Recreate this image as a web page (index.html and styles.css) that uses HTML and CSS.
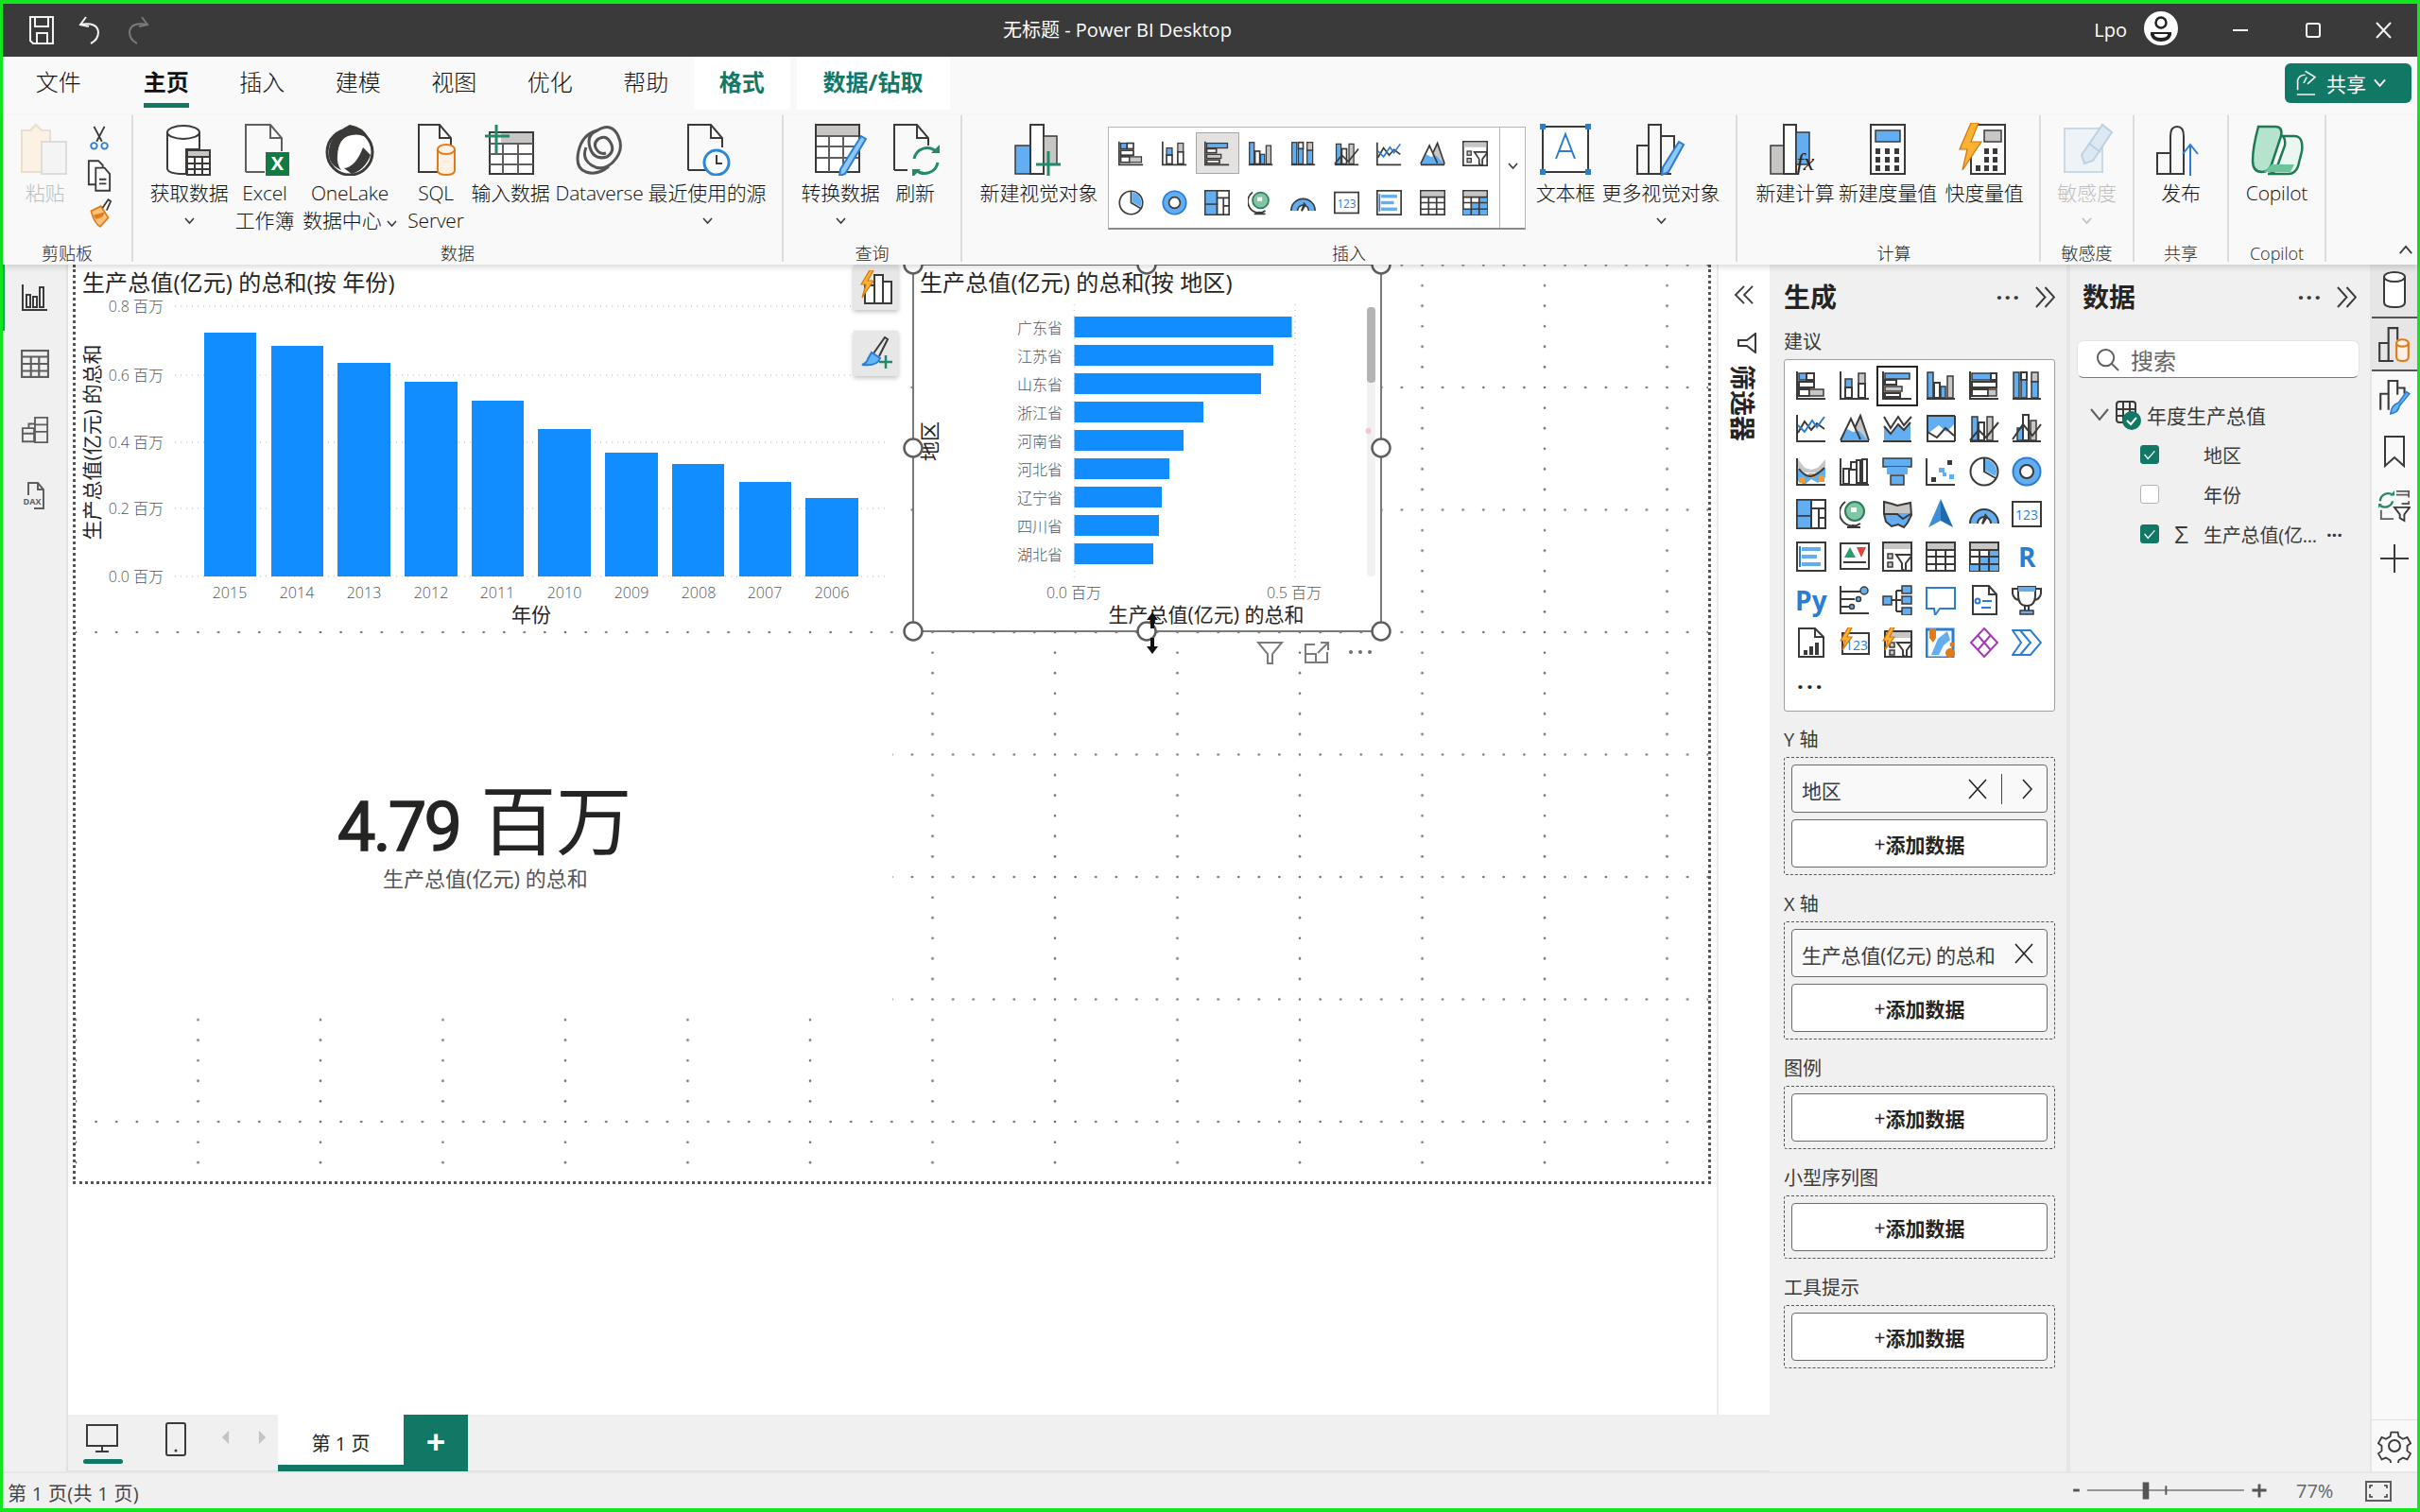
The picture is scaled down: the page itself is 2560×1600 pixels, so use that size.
FILE: index.html
```html
<!DOCTYPE html>
<html lang="zh-CN">
<head>
<meta charset="utf-8">
<title>无标题 - Power BI Desktop</title>
<link rel="stylesheet" href="styles.css">
</head>
<body>
<svg class="defs" aria-hidden="true">
<defs>
<pattern id="dots" patternUnits="userSpaceOnUse" x="-2" y="-1.5" width="129.5" height="129.5">
  <circle class="dot" cx="2" cy="2" r="1.3"/><circle class="dot" cx="23.6" cy="2" r="1.3"/><circle class="dot" cx="45.2" cy="2" r="1.3"/><circle class="dot" cx="66.8" cy="2" r="1.3"/><circle class="dot" cx="88.3" cy="2" r="1.3"/><circle class="dot" cx="109.9" cy="2" r="1.3"/>
  <circle class="dot" cx="2" cy="23.6" r="1.3"/><circle class="dot" cx="2" cy="45.2" r="1.3"/><circle class="dot" cx="2" cy="66.8" r="1.3"/><circle class="dot" cx="2" cy="88.3" r="1.3"/><circle class="dot" cx="2" cy="109.9" r="1.3"/>
</pattern>
</defs>

<!-- visual icons -->
<symbol id="v1" viewBox="0 0 32 32"><path class="ln" d="M1 1v29h30"/><rect class="bb" x="3" y="3" width="8" height="7"/><rect class="lb" x="11" y="3" width="8" height="7"/><rect class="lb" x="3" y="12" width="16" height="6"/><rect class="lb" x="3" y="20" width="11" height="7"/><rect class="gg" x="14" y="20" width="15" height="7"/></symbol>
<symbol id="v2" viewBox="0 0 32 32"><path class="ln" d="M1 1v29h30"/><rect class="bb" x="6" y="9" width="7" height="9"/><rect class="lb" x="6" y="18" width="7" height="11"/><rect class="gg" x="20" y="3" width="7" height="11"/><rect class="lb" x="20" y="14" width="7" height="15"/></symbol>
<symbol id="v3" viewBox="0 0 32 32"><path class="ln" d="M1 1v29h30"/><rect class="bb" x="3" y="3" width="26" height="6"/><rect class="lb" x="3" y="10" width="12" height="5"/><rect class="gg" x="3" y="17" width="18" height="5"/><rect class="lb" x="3" y="24" width="16" height="4"/></symbol>
<symbol id="v4" viewBox="0 0 32 32"><path class="ln" d="M1 30h30"/><rect class="bb" x="2" y="2" width="6" height="27"/><rect class="lb" x="9" y="13" width="6" height="16"/><rect class="bb" x="16" y="17" width="5" height="12"/><rect class="gg" x="23" y="6" width="6" height="23"/></symbol>
<symbol id="v5" viewBox="0 0 32 32"><path class="ln" d="M1 1v29h30"/><rect class="bb" x="3" y="3" width="20" height="7"/><rect class="lb" x="23" y="3" width="6" height="7"/><rect class="lb" x="3" y="12" width="26" height="6"/><rect class="lb" x="3" y="20" width="17" height="7"/><rect class="gg" x="20" y="20" width="9" height="7"/></symbol>
<symbol id="v6" viewBox="0 0 32 32"><path class="ln" d="M1 30h30"/><rect class="bb" x="2" y="2" width="6" height="27"/><rect class="lb" x="10" y="2" width="6" height="8"/><rect class="bb" x="10" y="10" width="6" height="19"/><rect class="gg" x="21" y="2" width="7" height="10"/><rect class="bb" x="21" y="12" width="7" height="17"/></symbol>
<symbol id="v7" viewBox="0 0 32 32"><path class="ln" d="M1 2v28h30"/><path class="ln" d="M2 21 9 9l7 9 6-7 8 6"/><path class="lnb" d="M2 13l7 7 8-12 5 7 8-11"/></symbol>
<symbol id="v8" viewBox="0 0 32 32"><path class="go" d="M16 17 23 2l8 28H16z"/><path class="bo" d="M1 30 8 17l6 3 7-1 10 11z"/><path class="ln" d="M1 29 12 6l10 22M31 30H1M16 16l6-13 9 26"/></symbol>
<symbol id="v9" viewBox="0 0 32 32"><path class="bo" d="M2 14l7 8 8-10 6 6 7-8v19H2z"/><path class="ln" d="M1 30h30M2 4l7 12 8-12 6 9 8-9M2 14l7 8 8-10 6 6 7-8"/></symbol>
<symbol id="v10" viewBox="0 0 32 32"><path class="bo" d="M2 3h29v8l-9 9-8-7-12 9z"/><path class="ln" d="M1 3h30M1 30h30M2 3v27M31 3v27M2 20l10 6 9-10 9 8"/></symbol>
<symbol id="v11" viewBox="0 0 32 32"><path class="ln" d="M1 30h30"/><rect class="bb" x="3" y="4" width="6" height="25"/><rect class="lb" x="10" y="10" width="6" height="19"/><rect class="gg" x="19" y="4" width="6" height="25"/><path class="ln" d="M1 29 10 18l8 8 13-16"/></symbol>
<symbol id="v12" viewBox="0 0 32 32"><path class="ln" d="M1 30h30"/><rect class="bb" x="6" y="16" width="6" height="13"/><rect class="lb" x="12" y="2" width="6" height="27"/><rect class="gg" x="20" y="8" width="6" height="21"/><path class="ln" d="M1 28 12 12l10 12 9-12"/></symbol>
<symbol id="v13" viewBox="0 0 32 32"><path class="go" d="M2 3l7 9 7 2 7-2 8-9v8l-7 6H9l-7-5z"/><path class="bo" d="M2 13l7 5 7 2 8-4 7-4v10l-8 6-7-4-7 6-7-4z"/><path d="M3 22h6v6H3zM24 20h6v7h-6zM13 18h6v5h-6z" fill="#f29b30"/><path class="ln" d="M1 2v28h30M3 13q7 9 13 8t14-9"/></symbol>
<symbol id="v14" viewBox="0 0 32 32"><path class="ln" d="M1 2v28h30"/><rect class="lb" x="4" y="13" width="6" height="16"/><rect class="lb" x="12" y="6" width="6" height="8"/><rect class="lb" x="18" y="4" width="4" height="24"/><rect class="lb" x="24" y="3" width="5" height="25"/></symbol>
<symbol id="v15" viewBox="0 0 32 32"><rect class="bb" x="1" y="2" width="30" height="9"/><rect class="bo" x="5" y="11" width="22" height="8"/><rect class="bb" x="9" y="20" width="14" height="10"/></symbol>
<symbol id="v16" viewBox="0 0 32 32"><path class="ln" d="M1 2v28h30"/><rect x="23" y="4" width="5" height="5" fill="#3b3a39"/><rect class="bo" x="14" y="12" width="6" height="5"/><rect class="bo" x="25" y="19" width="5" height="5"/><rect x="6" y="22" width="5" height="5" fill="#3b3a39"/><rect class="bo" x="18" y="17" width="4" height="4"/></symbol>
<symbol id="v17" viewBox="0 0 32 32"><circle class="lb" cx="16" cy="16" r="14.5"/><path class="ln" d="M16 2v14l12 7"/><path class="bo" d="M17 3a13 13 0 0 1 11 18L17 15z"/></symbol>
<symbol id="v18" viewBox="0 0 32 32"><path class="bo" fill-rule="evenodd" d="M16 1a15 15 0 1 0 .1 0zM16 9a7 7 0 1 1-.1 0z"/><circle class="ac" cx="16" cy="16" r="14.5"/><circle cx="16" cy="16" r="7" fill="#fff" stroke="#3b3a39" stroke-width="2"/></symbol>
<symbol id="v19" viewBox="0 0 32 32"><rect class="lb" x="1" y="1" width="30" height="30"/><rect class="bb" x="1" y="1" width="15" height="17"/><rect class="bb" x="1" y="18" width="15" height="13"/><path class="ln" d="M16 1v30M16 10h15M24 10v21M24 20h7"/></symbol>
<symbol id="v20" viewBox="0 0 32 32"><circle cx="16" cy="13" r="10" fill="#7fc6a4" stroke="#2f7b58" stroke-width="2"/><path class="ln" d="M6 3a14 14 0 0 0 16 23M14 27v3M8 30h14"/><path d="M12 9h6v5h-6z" fill="#fff"/></symbol>
<symbol id="v21" viewBox="0 0 32 32"><path class="go" d="M2 3l8 2 6 2 14-3v11l-28 1z"/><path class="bo" d="M2 15h28l-3 9-4 6-6-3-7 2-6-5z"/><path class="ln" d="M2 3l8 2 6 2 14-3 1 13-4 8-4 5-6-3-7 2-6-5-2-8zM3 16h13l6 5 8-5"/></symbol>
<symbol id="v22" viewBox="0 0 32 32"><path d="M16 0 3 30l13-7z" fill="#3e8fd8"/><path d="M16 0l13 30-13-7z" fill="#1f6bb0"/></symbol>
<symbol id="v23" viewBox="0 0 32 32"><path class="bo" d="M1 26a15 15 0 0 1 30 0h-8a7 7 0 0 0-14 0z"/><path class="ln" d="M1 26a15 15 0 0 1 30 0M9 26a7 7 0 0 1 14 0"/><path d="M17 15l3 4-5 8-2-1z" fill="#3b3a39"/></symbol>
<symbol id="v25" viewBox="0 0 32 32"><rect class="lb" x="1" y="1" width="30" height="30"/><rect class="bo" x="6" y="6" width="20" height="4"/><rect class="bo" x="6" y="14" width="16" height="4"/><rect class="bo" x="6" y="22" width="20" height="4"/><path class="lnb" d="M4 5v22"/></symbol>
<symbol id="v26" viewBox="0 0 32 32"><rect class="lb" x="1" y="2" width="30" height="27"/><path d="M5 17 11 6l6 11z" fill="#2e9b6b"/><path d="M18 6h10l-5 11z" fill="#e0443e"/><path class="ln" d="M4 22h24"/></symbol>
<symbol id="v27" viewBox="0 0 32 32"><rect class="lb" x="1" y="1" width="30" height="30"/><rect class="go" x="2" y="2" width="28" height="6"/><rect class="gg" x="6" y="13" width="5" height="5"/><rect class="gg" x="6" y="22" width="5" height="5"/><path class="lb" d="M15 14h17l-7 9v9l-4-3v-6z"/></symbol>
<symbol id="v28" viewBox="0 0 32 32"><rect class="lb" x="1" y="1" width="30" height="30"/><rect class="go" x="2" y="2" width="28" height="7"/><path class="ln" d="M1 9h30M1 16h30M1 24h30M11 9v22M21 9v22"/></symbol>
<symbol id="v29" viewBox="0 0 32 32"><rect class="lb" x="1" y="1" width="30" height="30"/><rect class="go" x="2" y="2" width="28" height="7"/><rect class="bo" x="21" y="9" width="10" height="22"/><rect class="bo" x="1" y="24" width="30" height="7"/><rect class="bo" x="11" y="16" width="10" height="8"/><path class="ln" d="M1 9h30M1 16h30M1 24h30M11 9v22M21 9v22"/></symbol>
<symbol id="v32" viewBox="0 0 32 32"><path class="ln" d="M1 1v29h30M2 7h20M2 15h14M2 23h8"/><circle class="bb" cx="26" cy="6" r="4"/><circle class="bb" cx="20" cy="15" r="2.5"/><circle class="bb" cx="13" cy="23" r="2.5"/></symbol>
<symbol id="v33" viewBox="0 0 32 32"><path class="ln" d="M10 16h10M15 6v22M15 6h6M15 28h6"/><rect class="bb" x="1" y="12" width="9" height="9"/><rect class="bb" x="21" y="1" width="10" height="8"/><rect class="bb" x="21" y="12" width="10" height="8"/><rect class="bb" x="21" y="24" width="10" height="8"/></symbol>
<symbol id="v34" viewBox="0 0 32 32"><path class="lnb" d="M1 3h30v22H15l-5 7-1-7H1z"/></symbol>
<symbol id="v35" viewBox="0 0 32 32"><path class="lb" d="M4 1h17l8 9v21H4z"/><path class="ln" d="M21 1v9h8"/><circle class="ac" cx="9" cy="17" r="2.5"/><path class="lnb" d="M14 17h10M13 24h10"/></symbol>
<symbol id="v36" viewBox="0 0 32 32"><path class="ln" d="M6 4H1v5q1 6 7 7M26 4h5v5q-1 6-7 7M14 22v5M18 22v5"/><path class="lb" d="M7 2h18v9q0 11-9 11T7 11z"/><rect class="bo" x="7" y="2" width="18" height="5"/><rect class="bb" x="9" y="27" width="14" height="4"/></symbol>
<symbol id="v37" viewBox="0 0 32 32"><path class="lb" d="M3 1h17l9 9v21H3z"/><path class="ln" d="M20 1v9h9"/><rect x="8" y="24" width="4" height="5" fill="#3b3a39"/><rect x="14" y="20" width="4" height="9" fill="#3b3a39"/><rect x="20" y="16" width="4" height="13" fill="#3b3a39"/></symbol>
<symbol id="v39" viewBox="0 0 32 32"><rect class="lb" x="3" y="4" width="28" height="27"/><rect class="go" x="4" y="5" width="26" height="6"/><rect class="gg" x="8" y="16" width="5" height="5"/><rect class="gg" x="8" y="24" width="5" height="5"/><path class="lb" d="M16 16h16l-6 8v8l-4-3v-5z"/><path class="bolt" d="M9 0 1 14h5l-3 10 10-14H8l5-10z"/></symbol>
<symbol id="v40" viewBox="0 0 32 32"><path d="M1 2h28v30H1z" fill="#fff" stroke="#2b7cd3" stroke-width="3"/><path class="bo" d="M13 12l10-8 3 9-7 6-5 10H6z"/><path d="M4 1h7v10l-3 5-4-5z" fill="#e07b1a"/><circle cx="26" cy="27" r="5" fill="#e07b1a"/><circle cx="28" cy="18" r="2.5" fill="#e07b1a"/></symbol>
<symbol id="v41" viewBox="0 0 32 32"><path d="M16 1l14 15-14 15L2 16z" fill="none" stroke="#a23bb0" stroke-width="2"/><path d="M9 8l14 16M23 8 9 24" fill="none" stroke="#a23bb0" stroke-width="2"/></symbol>
<symbol id="v42" viewBox="0 0 32 32"><path d="M1 3h19l11 13-11 13H1l9-13z" fill="none" stroke="#2b7cd3" stroke-width="2"/><path d="M9 3l11 13L9 29" fill="none" stroke="#2b7cd3" stroke-width="2"/></symbol>

<!-- ribbon icons -->
<symbol id="r-paste" viewBox="0 0 56 56"><path fill="#fbf2e4" stroke="#eadfcc" stroke-width="2" d="M3 8h9l6-6 6 6h9v44H3z"/><rect x="24" y="20" width="26" height="34" fill="#f4f4f4" stroke="#dedcda" stroke-width="2"/></symbol>
<symbol id="r-get" viewBox="0 0 56 56"><path class="lb" d="M5 10v38q0 6 17 6h3V28h14V10"/><ellipse class="lb" cx="22" cy="10" rx="17" ry="7"/><rect class="lb" x="26" y="29" width="24" height="26"/><rect class="go" x="27" y="30" width="22" height="6"/><path class="ln" d="M27 36h22M27 43h22M27 49h22M34 36v19M42 36v19"/></symbol>
<symbol id="r-lake" viewBox="0 0 56 56"><circle cx="28" cy="31" r="24" fill="#fff" stroke="#3b3a39" stroke-width="3"/><path fill="#3b3a39" d="M28 2q14 2 20 14-12-6-22-2-10 4-11 20-1 10 4 16Q4 44 6 28T28 2z"/><path fill="#3b3a39" d="M22 48q12-1 20-22l8 8Q44 50 30 54z"/></symbol>
<symbol id="r-sql" viewBox="0 0 56 56"><path class="ln" d="M30 52H10V2h22l12 14v10"/><path class="ln" d="M32 2v14h12"/><path d="M30 28v22q0 5 9 5t9-5V28" fill="#fdf0e4" stroke="#e07b1a" stroke-width="2"/><ellipse cx="39" cy="28" rx="9" ry="5" fill="#fdf0e4" stroke="#e07b1a" stroke-width="2"/></symbol>
<symbol id="r-enter" viewBox="0 0 56 56"><rect class="lb" x="6" y="10" width="46" height="44"/><rect class="go" x="18" y="11" width="33" height="10"/><path class="lg" d="M6 22h46M6 33h46M6 44h46M20 22v32M36 22v32"/><path class="gr" d="M13 2v30M1 14h26"/></symbol>
<symbol id="r-dv" viewBox="0 0 56 56"><path fill="none" stroke="#555" stroke-width="3" d="M14 26q-5 12 6 19t22-3q13-13 6-28T26 8q-12 4-8 18t18 10q9-6 4-15t-13-4q-6 5-2 11t10 4"/><path fill="none" stroke="#555" stroke-width="3" d="M26 8Q10 12 6 30t8 22 24-6"/></symbol>
<symbol id="r-recent" viewBox="0 0 56 56"><path class="ln" d="M8 50V2h24l12 14v10M8 50h20"/><path class="ln" d="M32 2v14h12"/><circle cx="38" cy="42" r="13" fill="#fff" stroke="#2b88d8" stroke-width="3"/><path class="ln" d="M38 34v9h6"/></symbol>
<symbol id="r-trans" viewBox="0 0 56 56"><rect class="lb" x="2" y="2" width="46" height="50"/><rect class="go" x="3" y="3" width="44" height="10"/><path class="lg" d="M3 14h44M3 25h44M3 37h44M16 14v38M31 14v38"/><path d="M50 14l5 3-22 37-6 2 1-7z" fill="#8ec8f6" stroke="#2b7cd3" stroke-width="2"/></symbol>
<symbol id="r-refresh" viewBox="0 0 56 56"><path class="ln" d="M6 50V2h24l12 14v8M6 50h14"/><path class="ln" d="M30 2v14h12"/><path class="gr" d="M27 38a14 14 0 0 1 23-8M52 42a14 14 0 0 1-23 8"/><path class="grf" d="M45 32h9v-9zM34 49h-9v9z"/></symbol>
<symbol id="r-newv" viewBox="0 0 56 56"><rect class="bb" x="3" y="24" width="16" height="30"/><rect class="lb" x="19" y="2" width="14" height="52"/><rect class="gg" x="33" y="14" width="14" height="30"/><path class="gr" d="M38 30v26M25 44h26"/></symbol>
<symbol id="r-text" viewBox="0 0 56 56"><rect class="lb" x="4" y="4" width="48" height="48"/><path class="lnb" d="M18 38 28 12l10 26M21 30h14"/><rect x="1" y="1" width="6" height="6" fill="#2b7cd3"/><rect x="49" y="1" width="6" height="6" fill="#2b7cd3"/><rect x="1" y="49" width="6" height="6" fill="#2b7cd3"/><rect x="49" y="49" width="6" height="6" fill="#2b7cd3"/></symbol>
<symbol id="r-morev" viewBox="0 0 56 56"><path class="ln" d="M3 54V24h12v30zM15 54V2h13v52M28 14h14v25M3 54h36"/><path d="M47 20l5 3-16 29-7 3 1-8z" fill="#8ec8f6" stroke="#2b7cd3" stroke-width="2"/></symbol>
<symbol id="r-meas" viewBox="0 0 56 56"><rect class="lb" x="10" y="2" width="36" height="52"/><rect class="bb" x="15" y="8" width="26" height="12"/><path class="keys" d="M15 27h5v6h-5zM25 27h5v6h-5zM35 27h5v6h-5zM15 36h5v6h-5zM25 36h5v6h-5zM35 36h5v6h-5zM15 45h5v6h-5zM25 45h5v6h-5zM35 45h5v6h-5z"/></symbol>
<symbol id="r-quick" viewBox="0 0 56 56"><rect class="lb" x="14" y="2" width="36" height="52"/><rect class="gg" x="28" y="8" width="18" height="12"/><path class="keys" d="M28 27h5v6h-5zM37 27h5v6h-5zM28 36h5v6h-5zM37 36h5v6h-5zM19 45h5v6h-5zM28 45h5v6h-5zM37 45h5v6h-5z"/><path class="bolt" d="M14 0 2 28h8L5 50 25 20H14l8-20z"/></symbol>
<symbol id="r-sens" viewBox="0 0 56 56"><rect x="4" y="6" width="40" height="46" fill="#eef3f7" stroke="#c9d9e6" stroke-width="2"/><path d="M22 34 44 2l10 8-20 30-9 3z" fill="#dce9f3" stroke="#bcd2e3" stroke-width="2"/><path d="M30 22l12 9" stroke="#bcd2e3" stroke-width="2"/></symbol>
<symbol id="r-pub" viewBox="0 0 56 56"><path class="ln" d="M3 54V32h14v22zM17 40V14q0-10 7-10t7 10v40H3M17 32V20"/><path class="lnb" d="M38 56V24M30 33l8-10 8 10"/></symbol>
<symbol id="r-cop" viewBox="0 0 56 56"><path fill="#b6e3cc" stroke="#1e7a55" stroke-width="2.5" d="M8 4h18q8 0 6 10L22 44q-3 8-10 8-10 0-10-12 0-14 6-36z"/><path fill="#e9f7f0" stroke="#1e7a55" stroke-width="2.5" d="M34 14h12q10 0 8 16l-4 16q-3 8-10 8H18q7 0 10-8l8-22q1-6-2-10z"/><path fill="#6cc49a" d="M22 44h24l-4 8H14z"/></symbol>
<symbol id="s-scis" viewBox="0 0 28 28"><path class="ln" d="M8 1l9 17M20 1l-9 17"/><circle class="ac" cx="8" cy="23" r="3.5"/><circle class="ac" cx="20" cy="23" r="3.5"/></symbol>
<symbol id="s-copy" viewBox="0 0 28 36"><path class="lb" d="M2 1h11l5 5v22H2z"/><path class="lb" d="M10 9h10l6 7v19H10z"/><path class="ln" d="M14 22h8M14 27h8"/></symbol>
<symbol id="s-brush" viewBox="0 0 30 36"><path d="M5 15 17 9l9 14-10 11q-7-4-11-19z" fill="#fbc27a" stroke="#e07b1a" stroke-width="2"/><path class="ln" d="M19 11 26 1l3 2-5 11"/><path d="M8 20l14-4-3 6-8 3z" fill="#e07b1a"/></symbol>
<!-- nav + strip -->
<symbol id="n-rep" viewBox="0 0 28 30"><path class="ln" d="M1 1v27h26"/><rect class="lb" x="5" y="12" width="4" height="13"/><rect class="lb" x="12" y="14" width="4" height="11"/><rect class="lb" x="19" y="4" width="4" height="21"/></symbol>
<symbol id="n-tab" viewBox="0 0 28 28"><rect class="lg" x="1" y="1" width="26" height="26"/><path class="lg" d="M1 7h26M1 14h26M1 21h26M10 7v20M18 7v20"/></symbol>
<symbol id="n-mod" viewBox="0 0 32 32"><path class="lg" d="M2 14h13v6H2zM2 20h13v9H2zM16 2h14v8H16zM16 10h14v8H16zM16 18h14v12H16zM9 14V9h7"/></symbol>
<symbol id="x-db" viewBox="0 0 28 40"><path class="lb" d="M3 6v27q0 5 11 5t11-5V6"/><ellipse class="lb" cx="14" cy="6" rx="11" ry="5"/></symbol>
<symbol id="x-chartdb" viewBox="0 0 32 36"><path class="ln" d="M1 35V17h9v18zM10 18V2h9v12M1 35h14"/><path d="M18 17v14q0 4 6 4t6-4V17" fill="#fdf0e4" stroke="#e07b1a" stroke-width="2"/><ellipse cx="24" cy="17" rx="6" ry="3.5" fill="#fdf0e4" stroke="#e07b1a" stroke-width="2"/></symbol>
<symbol id="x-brush" viewBox="0 0 32 36"><path class="ln" d="M2 30V14h8v16M10 16V1h9v14M19 8h7v6"/><path d="M28 12l3 2-10 12q-1 7-9 8 1-9 8-11z" fill="#64b5f6" stroke="#2b7cd3" stroke-width="1.5"/></symbol>
<symbol id="x-mark" viewBox="0 0 22 34"><path class="ln" d="M1 1h20v31l-10-9-10 9z"/></symbol>
<symbol id="x-sync" viewBox="0 0 36 36"><path class="gr2" d="M2 14a9 9 0 0 1 14-7M16 14a9 9 0 0 1-14 5"/><path class="grf" d="M13 8h5V2zM4 17H0v5z"/><path class="lg" d="M20 3h14v7M20 7h14M3 24v10h14M26 17h8v-3"/><path class="lb" d="M18 21h17l-6 8v7l-5-3v-4z"/></symbol>
<symbol id="x-gear" viewBox="0 0 36 36"><path class="ln" d="M14 2h8l1 5 5 3 5-2 4 7-4 3v6l4 3-4 7-5-2-5 3-1 5h-8l-1-5-5-3-5 2-4-7 4-3v-6l-4-3 4-7 5 2 5-3z" transform="translate(1.8 1.8) scale(.9)"/><circle class="ln" cx="18" cy="18" r="6"/></symbol>
</svg>

<div class="app">
  <header class="titlebar">
    <div class="qat">
      <span class="qbtn"><svg class="qi" viewBox="0 0 26 30"><path class="wl" d="M1 1h24v28H4l-3-3z"/><path class="wl" d="M6 1v10h14V1M8 29V18h11v11"/></svg></span>
      <span class="qbtn"><svg class="qi" viewBox="0 0 26 30"><path class="wl" d="M9 1 3 9l9 2M3 9q18-3 19 8 0 8-8 12"/></svg></span>
      <span class="qbtn"><svg class="qi" viewBox="0 0 26 30"><path class="dl" d="M17 1l6 8-9 2M23 9Q5 6 4 17q0 8 8 12"/></svg></span>
    </div>
    <div class="doc-title">无标题 - Power BI Desktop</div>
    <div class="win">
      <span class="user">Lpo</span>
      <svg class="avatar" viewBox="0 0 38 38"><circle cx="19" cy="19" r="18" fill="#fff"/><circle cx="19" cy="13" r="5.5" fill="none" stroke="#222" stroke-width="2.5"/><path d="M8 23h22v3q-2 7-11 7T8 26z" fill="#222"/><path d="M12 25h14v1q-1 3-7 3t-7-3z" fill="#fff"/></svg>
      <span class="wbtn"><svg class="wi" viewBox="0 0 20 20"><path class="wl" d="M2 10h16"/></svg></span>
      <span class="wbtn"><svg class="wi" viewBox="0 0 20 20"><rect class="wl" x="3" y="3" width="14" height="14" rx="2"/></svg></span>
      <span class="wbtn wbtn-close"><svg class="wi" viewBox="0 0 20 20"><path class="wl" d="M3 2l15 16M18 2 3 18"/></svg></span>
    </div>
  </header>

  <nav class="tabs">
    <span class="tab tab-file">文件</span>
    <span class="tab tab-on">主页</span>
    <span class="tab">插入</span>
    <span class="tab">建模</span>
    <span class="tab">视图</span>
    <span class="tab">优化</span>
    <span class="tab">帮助</span>
    <span class="tab tab-ctx">格式</span>
    <span class="tab tab-ctx tab-wide">数据/钻取</span>
    <span class="share"><svg class="share-i" viewBox="0 0 30 34"><path class="wl" d="M2 26V13q2-7 10-7M12 1l13 8-10 9M10 17l4-8M1 32h24"/></svg>共享<svg class="share-c" viewBox="0 0 14 10"><path class="wl" d="M1 1l6 7 6-7"/></svg></span>
  </nav>

  <section class="ribbon">
    <div class="group g-clip">
      <div class="items">
        <div class="item i-paste off"><svg class="ri"><use href="#r-paste"/></svg><span class="lab">粘贴</span></div>
        <div class="smalls">
          <svg class="sm"><use href="#s-scis"/></svg>
          <svg class="sm"><use href="#s-copy"/></svg>
          <svg class="sm"><use href="#s-brush"/></svg>
        </div>
      </div>
      <div class="glabel">剪贴板</div>
    </div>
    <div class="group g-data">
      <div class="items">
        <div class="item i80"><svg class="ri"><use href="#r-get"/></svg><span class="lab">获取数据</span><svg class="chev"><path d="M1 2l4.500 5 4.500-5"/></svg></div>
        <div class="item i80"><svg class="ri" viewBox="0 0 56 56"><path class="lg" d="M8 52V2h26l12 14v14"/><path class="lg" d="M34 2v14h12M8 52h20"/><rect x="29" y="31" width="25" height="25" fill="#107c41"/><text class="tx" x="41.5" y="50">X</text></svg><span class="lab">Excel</span><span class="lab">工作簿</span></div>
        <div class="item i100"><svg class="ri"><use href="#r-lake"/></svg><span class="lab">OneLake</span><span class="lab">数据中心 <svg class="chev chev-in"><path d="M1 2l4.500 5 4.500-5"/></svg></span></div>
        <div class="item i82"><svg class="ri"><use href="#r-sql"/></svg><span class="lab">SQL</span><span class="lab">Server</span></div>
        <div class="item i76"><svg class="ri"><use href="#r-enter"/></svg><span class="lab">输入数据</span></div>
        <div class="item i112"><svg class="ri"><use href="#r-dv"/></svg><span class="lab">Dataverse</span></div>
        <div class="item i116"><svg class="ri"><use href="#r-recent"/></svg><span class="lab">最近使用的源</span><svg class="chev"><path d="M1 2l4.500 5 4.500-5"/></svg></div>
      </div>
      <div class="glabel">数据</div>
    </div>
    <div class="group g-query">
      <div class="items">
        <div class="item i80"><svg class="ri"><use href="#r-trans"/></svg><span class="lab">转换数据</span><svg class="chev"><path d="M1 2l4.500 5 4.500-5"/></svg></div>
        <div class="item i78"><svg class="ri"><use href="#r-refresh"/></svg><span class="lab">刷新</span></div>
      </div>
      <div class="glabel">查询</div>
    </div>
    <div class="group g-insert">
      <div class="items">
        <div class="item i138"><svg class="ri"><use href="#r-newv"/></svg><span class="lab">新建视觉对象</span></div>
        <div class="gallery">
          <div class="gal-grid">
            <span class="cell"><svg class="gi"><use href="#v1"/></svg></span>
            <span class="cell"><svg class="gi"><use href="#v2"/></svg></span>
            <span class="cell cell-on"><svg class="gi"><use href="#v3"/></svg></span>
            <span class="cell"><svg class="gi"><use href="#v4"/></svg></span>
            <span class="cell"><svg class="gi"><use href="#v6"/></svg></span>
            <span class="cell"><svg class="gi"><use href="#v11"/></svg></span>
            <span class="cell"><svg class="gi"><use href="#v7"/></svg></span>
            <span class="cell"><svg class="gi"><use href="#v8"/></svg></span>
            <span class="cell"><svg class="gi"><use href="#v27"/></svg></span>
            <span class="cell"><svg class="gi"><use href="#v17"/></svg></span>
            <span class="cell"><svg class="gi"><use href="#v18"/></svg></span>
            <span class="cell"><svg class="gi"><use href="#v19"/></svg></span>
            <span class="cell"><svg class="gi"><use href="#v20"/></svg></span>
            <span class="cell"><svg class="gi"><use href="#v23"/></svg></span>
            <span class="cell"><svg class="gi" viewBox="0 0 32 32"><rect class="lb" x="1" y="3" width="30" height="26"/><text class="t123" x="16" y="22">123</text></svg></span>
            <span class="cell"><svg class="gi"><use href="#v25"/></svg></span>
            <span class="cell"><svg class="gi"><use href="#v28"/></svg></span>
            <span class="cell"><svg class="gi"><use href="#v29"/></svg></span>
          </div>
          <div class="gal-more"><svg class="chev"><path d="M1 2l4.500 5 4.500-5"/></svg></div>
        </div>
        <div class="item i68"><svg class="ri"><use href="#r-text"/></svg><span class="lab">文本框</span></div>
        <div class="item i134"><svg class="ri"><use href="#r-morev"/></svg><span class="lab">更多视觉对象</span><svg class="chev"><path d="M1 2l4.500 5 4.500-5"/></svg></div>
      </div>
      <div class="glabel">插入</div>
    </div>
    <div class="group g-calc">
      <div class="items">
        <div class="item i98"><svg class="ri" viewBox="0 0 56 56"><rect class="gg" x="2" y="24" width="14" height="30"/><rect class="lb" x="16" y="2" width="13" height="52"/><rect class="bb" x="29" y="10" width="14" height="34"/><text class="tfx" x="39" y="50">fx</text></svg><span class="lab">新建计算</span></div>
        <div class="item i98"><svg class="ri"><use href="#r-meas"/></svg><span class="lab">新建度量值</span></div>
        <div class="item i106"><svg class="ri"><use href="#r-quick"/></svg><span class="lab">快度量值</span></div>
      </div>
      <div class="glabel">计算</div>
    </div>
    <div class="group g-sens">
      <div class="items">
        <div class="item ifill off"><svg class="ri"><use href="#r-sens"/></svg><span class="lab">敏感度</span><svg class="chev"><path d="M1 2l4.500 5 4.500-5"/></svg></div>
      </div>
      <div class="glabel">敏感度</div>
    </div>
    <div class="group g-share">
      <div class="items">
        <div class="item ifill"><svg class="ri"><use href="#r-pub"/></svg><span class="lab">发布</span></div>
      </div>
      <div class="glabel">共享</div>
    </div>
    <div class="group g-cop">
      <div class="items">
        <div class="item ifill"><svg class="ri"><use href="#r-cop"/></svg><span class="lab">Copilot</span></div>
      </div>
      <div class="glabel">Copilot</div>
    </div>
    <svg class="collapse" viewBox="0 0 18 12"><path class="ln" d="M2 10l7-8 7 8"/></svg>
  </section>

  <main class="main">
    <aside class="leftnav">
      <span class="nav-btn nav-on"><svg class="ni"><use href="#n-rep"/></svg></span>
      <span class="nav-btn"><svg class="ni"><use href="#n-tab"/></svg></span>
      <span class="nav-btn"><svg class="ni"><use href="#n-mod"/></svg></span>
      <span class="nav-btn"><svg class="ni" viewBox="0 0 30 30"><path class="lg" d="M8 14V1h10l6 7v20H14"/><path class="lg" d="M18 1v7h6"/><text class="tdax" x="12" y="24">DAX</text></svg></span>
    </aside>

    <div class="center">
      <div class="work">
        <div class="canvas">
          <div class="page">
            <svg class="grid"><rect width="100%" height="100%" fill="url(#dots)"/></svg>

            <svg class="visual v-years" viewBox="80 280 880 388">
              <rect x="80" y="280" width="880" height="388" fill="#fff"/>
              <text class="ct-title" x="87" y="298">生产总值(亿元) 的总和(按 年份)</text>
              <path class="gl" d="M185 324H938M185 397H938M185 468H938M185 538H938M185 610H938"/>
              <text class="tick end" x="173" y="324">0.8 百万</text>
              <text class="tick end" x="173" y="397">0.6 百万</text>
              <text class="tick end" x="173" y="468">0.4 百万</text>
              <text class="tick end" x="173" y="538">0.2 百万</text>
              <text class="tick end" x="173" y="610">0.0 百万</text>
              <rect class="bar" x="216" y="352" width="55" height="258"/>
              <rect class="bar" x="287" y="366" width="55" height="244"/>
              <rect class="bar" x="357" y="384" width="56" height="226"/>
              <rect class="bar" x="428" y="404" width="56" height="206"/>
              <rect class="bar" x="499" y="424" width="55" height="186"/>
              <rect class="bar" x="569" y="454" width="56" height="156"/>
              <rect class="bar" x="640" y="479" width="56" height="131"/>
              <rect class="bar" x="711" y="491" width="55" height="119"/>
              <rect class="bar" x="782" y="510" width="55" height="100"/>
              <rect class="bar" x="852" y="527" width="56" height="83"/>
              <text class="tick mid" x="243" y="627">2015</text>
              <text class="tick mid" x="314" y="627">2014</text>
              <text class="tick mid" x="385" y="627">2013</text>
              <text class="tick mid" x="456" y="627">2012</text>
              <text class="tick mid" x="526" y="627">2011</text>
              <text class="tick mid" x="597" y="627">2010</text>
              <text class="tick mid" x="668" y="627">2009</text>
              <text class="tick mid" x="739" y="627">2008</text>
              <text class="tick mid" x="809" y="627">2007</text>
              <text class="tick mid" x="880" y="627">2006</text>
              <text class="ax-title mid" x="562" y="650">年份</text>
              <text class="ax-title mid" transform="rotate(-90 97 468)" x="97" y="468">生产总值(亿元) 的总和</text>
            </svg>

            <div class="float-tools">
              <span class="float-btn"><svg class="fb-i" viewBox="0 0 34 36"><rect class="lb" x="5" y="16" width="10" height="19"/><rect class="lb" x="15" y="5" width="9" height="30"/><rect class="lb" x="24" y="12" width="9" height="23"/><path class="bolt" d="M10 0 1 15h5L2 29 14 11H8l6-11z"/></svg></span>
              <span class="float-btn"><svg class="fb-i" viewBox="0 0 34 36"><path class="ln" d="M14 18 26 1l3 2-9 18"/><path d="M12 17l9 6q-3 9-19 7 5-2 6-6z" fill="#64b5f6" stroke="#2b7cd3" stroke-width="2"/><path class="gr2" d="M27 20v14M20 27h14"/></svg></span>
            </div>

            <div class="kpi">
              <div class="kpi-val"><span class="kpi-num">4.79</span> <span class="kpi-unit">百万</span></div>
              <div class="kpi-lab">生产总值(亿元) 的总和</div>
            </div>

            <svg class="visual v-region" viewBox="950 264 530 440">
              <rect class="sel" x="966" y="280" width="495" height="388"/>
              <text class="ct-title" x="973" y="298">生产总值(亿元) 的总和(按 地区)</text>
              <path class="gl" d="M1136.500 322V612M1370 322V612"/>
              <text class="tick end" x="1124" y="347">广东省</text>
              <text class="tick end" x="1124" y="377">江苏省</text>
              <text class="tick end" x="1124" y="407">山东省</text>
              <text class="tick end" x="1124" y="437">浙江省</text>
              <text class="tick end" x="1124" y="467">河南省</text>
              <text class="tick end" x="1124" y="497">河北省</text>
              <text class="tick end" x="1124" y="527">辽宁省</text>
              <text class="tick end" x="1124" y="557">四川省</text>
              <text class="tick end" x="1124" y="587">湖北省</text>
              <rect class="bar" x="1136.500" y="335" width="230" height="22"/>
              <rect class="bar" x="1136.500" y="365" width="210.500" height="22"/>
              <rect class="bar" x="1136.500" y="395" width="197.500" height="22"/>
              <rect class="bar" x="1136.500" y="425" width="136.500" height="22"/>
              <rect class="bar" x="1136.500" y="455" width="115.500" height="22"/>
              <rect class="bar" x="1136.500" y="485" width="100.500" height="22"/>
              <rect class="bar" x="1136.500" y="515" width="92.500" height="22"/>
              <rect class="bar" x="1136.500" y="545" width="89.500" height="22"/>
              <rect class="bar" x="1136.500" y="575" width="83.500" height="22"/>
              <text class="tick mid" x="1136" y="627">0.0 百万</text>
              <text class="tick mid" x="1369" y="627">0.5 百万</text>
              <text class="ax-title mid" x="1276" y="650">生产总值(亿元) 的总和</text>
              <text class="ax-title mid" transform="rotate(-90 983 467)" x="983" y="467">地区</text>
              <rect class="sb-track" x="1446" y="325" width="9" height="285" rx="4"/>
              <rect class="sb-thumb" x="1446" y="325" width="9" height="80" rx="4"/>
              <circle cx="1447.500" cy="456" r="3" fill="#f2c4cc"/>
              <circle class="hd" cx="966" cy="280" r="9.500"/><circle class="hd" cx="1213" cy="280" r="9.500"/><circle class="hd" cx="1461" cy="280" r="9.500"/>
              <circle class="hd" cx="966" cy="474" r="9.500"/><circle class="hd" cx="1461" cy="474" r="9.500"/>
              <circle class="hd" cx="966" cy="668" r="9.500"/><circle class="hd" cx="1213" cy="668" r="9.500"/><circle class="hd" cx="1461" cy="668" r="9.500"/>
              <path class="arrow" d="M1219 648l-6 8h4v9h4v-9h4zM1219 692l-6-8h4v-9h4v9h4z"/>
              <path class="hdr" d="M1331 680h25l-10 12v10h-5v-10z"/>
              <path class="hdr" d="M1391 682h-10v19h23v-11M1382 692h10v9M1394 691l10-10M1397 680h8v8"/>
              <circle class="hdd" cx="1429" cy="690" r="2"/><circle class="hdd" cx="1439" cy="690" r="2"/><circle class="hdd" cx="1449" cy="690" r="2"/>
            </svg>
          </div>
        </div>
        <aside class="filters">
          <svg class="flt-coll" viewBox="0 0 24 22"><path class="ln" d="M12 1 2 11l10 10M22 1 12 11l10 10"/></svg>
          <svg class="flt-fun" viewBox="0 0 20 22"><path class="ln" d="M19 1v20l-9-7H1v-6h9z"/></svg>
          <div class="flt-txt">筛选器</div>
        </aside>
      </div>
      <div class="pagebar">
        <span class="device dev-on"><svg class="dev-i" viewBox="0 0 34 32"><rect class="ln" x="1" y="1" width="32" height="22"/><path class="ln" d="M17 23v5M10 29h14"/></svg></span>
        <span class="device dev-ph"><svg class="dev-p" viewBox="0 0 22 36"><rect class="ln" x="1" y="1" width="20" height="34" rx="2"/><circle cx="11" cy="30" r="1.500" fill="#3b3a39"/></svg></span>
        <svg class="pg-ar" viewBox="0 0 10 18"><path d="M9 1v16L1 9z" fill="#c4c4c4"/></svg>
        <svg class="pg-ar" viewBox="0 0 10 18"><path d="M1 1v16l8-8z" fill="#c4c4c4"/></svg>
        <span class="pg-tab">第 1 页</span>
        <span class="pg-add">+</span>
      </div>
    </div>

    <section class="pane pane-build">
      <div class="pane-head">
        <h2 class="pane-title">生成</h2>
        <span class="dots">···</span>
        <svg class="pane-chev" viewBox="0 0 22 24"><path class="ln" d="M1 1l10 11L1 23M11 1l10 11-10 11"/></svg>
      </div>
      <div class="f-label f-first">建议</div>
      <div class="viz-box">
        <span class="viz"><svg class="vi"><use href="#v1"/></svg></span>
        <span class="viz"><svg class="vi"><use href="#v2"/></svg></span>
        <span class="viz viz-on"><svg class="vi"><use href="#v3"/></svg></span>
        <span class="viz"><svg class="vi"><use href="#v4"/></svg></span>
        <span class="viz"><svg class="vi"><use href="#v5"/></svg></span>
        <span class="viz"><svg class="vi"><use href="#v6"/></svg></span>
        <span class="viz"><svg class="vi"><use href="#v7"/></svg></span>
        <span class="viz"><svg class="vi"><use href="#v8"/></svg></span>
        <span class="viz"><svg class="vi"><use href="#v9"/></svg></span>
        <span class="viz"><svg class="vi"><use href="#v10"/></svg></span>
        <span class="viz"><svg class="vi"><use href="#v11"/></svg></span>
        <span class="viz"><svg class="vi"><use href="#v12"/></svg></span>
        <span class="viz"><svg class="vi"><use href="#v13"/></svg></span>
        <span class="viz"><svg class="vi"><use href="#v14"/></svg></span>
        <span class="viz"><svg class="vi"><use href="#v15"/></svg></span>
        <span class="viz"><svg class="vi"><use href="#v16"/></svg></span>
        <span class="viz"><svg class="vi"><use href="#v17"/></svg></span>
        <span class="viz"><svg class="vi"><use href="#v18"/></svg></span>
        <span class="viz"><svg class="vi"><use href="#v19"/></svg></span>
        <span class="viz"><svg class="vi"><use href="#v20"/></svg></span>
        <span class="viz"><svg class="vi"><use href="#v21"/></svg></span>
        <span class="viz"><svg class="vi"><use href="#v22"/></svg></span>
        <span class="viz"><svg class="vi"><use href="#v23"/></svg></span>
        <span class="viz"><svg class="vi" viewBox="0 0 32 32"><rect class="lb" x="1" y="3" width="30" height="26"/><text class="t123" x="16" y="22">123</text></svg></span>
        <span class="viz"><svg class="vi"><use href="#v25"/></svg></span>
        <span class="viz"><svg class="vi"><use href="#v26"/></svg></span>
        <span class="viz"><svg class="vi"><use href="#v27"/></svg></span>
        <span class="viz"><svg class="vi"><use href="#v28"/></svg></span>
        <span class="viz"><svg class="vi"><use href="#v29"/></svg></span>
        <span class="viz viz-r">R</span>
        <span class="viz viz-r">Py</span>
        <span class="viz"><svg class="vi"><use href="#v32"/></svg></span>
        <span class="viz"><svg class="vi"><use href="#v33"/></svg></span>
        <span class="viz"><svg class="vi"><use href="#v34"/></svg></span>
        <span class="viz"><svg class="vi"><use href="#v35"/></svg></span>
        <span class="viz"><svg class="vi"><use href="#v36"/></svg></span>
        <span class="viz"><svg class="vi"><use href="#v37"/></svg></span>
        <span class="viz"><svg class="vi" viewBox="0 0 32 32"><rect class="lb" x="3" y="6" width="28" height="22"/><text class="t123" x="18" y="24">123</text><path class="bolt" d="M9 0 1 14h5l-3 10 10-14H8l5-10z"/></svg></span>
        <span class="viz"><svg class="vi"><use href="#v39"/></svg></span>
        <span class="viz"><svg class="vi"><use href="#v40"/></svg></span>
        <span class="viz"><svg class="vi"><use href="#v41"/></svg></span>
        <span class="viz"><svg class="vi"><use href="#v42"/></svg></span>
        <span class="viz viz-dots">···</span>
      </div>
      <div class="f-label">Y 轴</div>
      <div class="well">
        <div class="field"><span class="field-t">地区</span><svg class="fx"><path d="M1 1l18 20M19 1 1 21"/></svg><i class="fsep"></i><svg class="fc"><path d="M1 1l9 10L1 21"/></svg></div>
        <div class="addbtn"><span class="plus">+</span>添加数据</div>
      </div>
      <div class="f-label">X 轴</div>
      <div class="well">
        <div class="field"><span class="field-t">生产总值(亿元) 的总和</span><svg class="fx fx-last"><path d="M1 1l18 20M19 1 1 21"/></svg></div>
        <div class="addbtn"><span class="plus">+</span>添加数据</div>
      </div>
      <div class="f-label">图例</div>
      <div class="well"><div class="addbtn"><span class="plus">+</span>添加数据</div></div>
      <div class="f-label">小型序列图</div>
      <div class="well"><div class="addbtn"><span class="plus">+</span>添加数据</div></div>
      <div class="f-label">工具提示</div>
      <div class="well"><div class="addbtn"><span class="plus">+</span>添加数据</div></div>
    </section>

    <section class="pane pane-data">
      <div class="pane-head">
        <h2 class="pane-title">数据</h2>
        <span class="dots">···</span>
        <svg class="pane-chev" viewBox="0 0 22 24"><path class="ln" d="M1 1l10 11L1 23M11 1l10 11-10 11"/></svg>
      </div>
      <div class="search">
        <svg class="search-i" viewBox="0 0 26 26"><circle class="lg" cx="11" cy="11" r="9"/><path class="lg" d="M17 17l8 8"/></svg>
        <span>搜索</span>
      </div>
      <div class="tree">
        <div class="t-row t-root">
          <svg class="t-chev" viewBox="0 0 20 14"><path class="lg" d="M1 1l9 11 9-11"/></svg>
          <span class="t-ico"><svg class="t-tab" viewBox="0 0 22 26"><rect class="ln" x="1" y="1" width="20" height="22" rx="3"/><path class="ln" d="M1 9h20M1 16h20M8 1v22M15 1v22"/></svg><svg class="t-ok" viewBox="0 0 20 20"><circle cx="10" cy="10" r="10" fill="#117865"/><path d="M5 10l4 4 6-7" fill="none" stroke="#fff" stroke-width="2"/></svg></span>
          <span>年度生产总值</span>
        </div>
        <div class="t-row"><span class="cb cb-on"><svg viewBox="0 0 20 20"><path d="M4 10l4 5 8-9" fill="none" stroke="#fff" stroke-width="1.500"/></svg></span><span class="t-sig"></span><span>地区</span></div>
        <div class="t-row"><span class="cb"></span><span class="t-sig"></span><span>年份</span></div>
        <div class="t-row"><span class="cb cb-on"><svg viewBox="0 0 20 20"><path d="M4 10l4 5 8-9" fill="none" stroke="#fff" stroke-width="1.500"/></svg></span><span class="t-sig">Σ</span><span class="t-long">生产总值(亿...</span><span class="t-dots">···</span></div>
      </div>
    </section>

    <aside class="strip">
      <span class="st-btn st-on"><svg class="st-db"><use href="#x-db"/></svg></span>
      <span class="st-btn st-on"><svg class="st-i"><use href="#x-chartdb"/></svg></span>
      <span class="st-btn"><svg class="st-i"><use href="#x-brush"/></svg></span>
      <span class="st-btn"><svg class="st-m"><use href="#x-mark"/></svg></span>
      <span class="st-btn"><svg class="st-i"><use href="#x-sync"/></svg></span>
      <span class="st-btn"><svg class="st-p" viewBox="0 0 32 32"><path class="ln" d="M16 1v30M1 16h30"/></svg></span>
      <span class="st-gear"><svg class="st-g"><use href="#x-gear"/></svg></span>
    </aside>
  </main>

  <footer class="status">
    <span class="status-l">第 1 页(共 1 页)</span>
    <div class="zoom">
      <svg class="zoom-bar" viewBox="0 0 225 39"><path class="z-sym" d="M2.500 19h7"/><path class="z-line" d="M18 19H193"/><rect x="80" y="10" width="7" height="19" fill="#555"/><path class="z-tick" d="M106 14v10"/><path class="z-sym" d="M210 12v15M202 19h16"/></svg>
      <span class="zoom-pct">77%</span>
      <svg class="fit" viewBox="0 0 28 22"><rect class="lg" x="1" y="1" width="26" height="20"/><path class="ln1" d="M5 8V5h3M20 5h3v3M5 14v3h3M23 14v3h-3"/></svg>
    </div>
  </footer>
</div>
</body>
</html>
```
FILE: styles.css
```css
* { box-sizing: border-box; }
html, body { margin: 0; padding: 0; }
body {
  background: #f0f0f0;
  font-family: "Open Sans", "Noto Sans CJK SC", sans-serif;
  color: #252423;
  overflow: hidden;
}
.defs { width: 0; height: 0; position: absolute; }
.dot { fill: #6e6e6e; }

.app {
  width: 2560px;
  height: 1600px;
  border: solid #12e61e;
  border-width: 4px 3px 4px 3px;
  display: flex;
  flex-direction: column;
  background: #f0f0f0;
}

/* svg parts */
.ln { fill: none; stroke: #3b3a39; stroke-width: 2; }
.ln1 { fill: none; stroke: #3b3a39; stroke-width: 1.5; }
.lg { fill: none; stroke: #5f5e5c; stroke-width: 2; }
.lb { fill: #fff; stroke: #3b3a39; stroke-width: 2; }
.lnb { fill: none; stroke: #2b7cd3; stroke-width: 2; }
.ac { fill: none; stroke: #2b7cd3; stroke-width: 2; }
.bb { fill: #62aef0; stroke: #3b3a39; stroke-width: 1.5; }
.gg { fill: #c8c6c4; stroke: #3b3a39; stroke-width: 1.5; }
.bo { fill: #62aef0; }
.go { fill: #c8c6c4; }
.gr { fill: none; stroke: #23896a; stroke-width: 3; }
.gr2 { fill: none; stroke: #23896a; stroke-width: 2.5; }
.grf { fill: #23896a; }
.bolt { fill: #f9b233; stroke: #d9730d; stroke-width: 1.2; }
.keys { fill: #3b3a39; }
.wl { fill: none; stroke: #f3f3f3; stroke-width: 2; }
.dl { fill: none; stroke: #7a7a7a; stroke-width: 2; }
.t123 { font: 14px "Open Sans", sans-serif; fill: #2b7cd3; text-anchor: middle; }
.tx { font: bold 20px "Open Sans", sans-serif; fill: #fff; text-anchor: middle; }
.tfx { font: italic 26px "Liberation Serif", serif; fill: #252423; text-anchor: middle; }
.tdax { font: bold 9px "Open Sans", sans-serif; fill: #5f5e5c; text-anchor: middle; }

/* title bar */
.titlebar {
  height: 56px;
  flex: none;
  background: #3a3a3a;
  color: #fff;
  display: flex;
  align-items: center;
}
.qat { width: 1058px; flex: none; display: flex; padding-left: 15px; }
.qbtn { width: 51px; display: flex; justify-content: center; }
.qi { width: 26px; height: 30px; }
.doc-title { font-size: 20px; white-space: nowrap; margin-top: -3px; }
.win { margin-left: auto; display: flex; align-items: center; }
.user { font-size: 20px; margin-right: 17px; margin-top: -2px; }
.avatar { width: 38px; height: 38px; margin-right: 26px; margin-top: -4px; }
.wbtn { width: 77px; display: flex; justify-content: center; }
.wbtn-close { width: 72px; }
.wi { width: 20px; height: 20px; }

/* tabs */
.tabs {
  height: 62px;
  flex: none;
  background: #f9f9f9;
  display: flex;
  padding-left: 8px;
  position: relative;
}
.tab {
  width: 101.5px;
  height: 56px;
  font-size: 24px;
  line-height: 54px;
  text-align: center;
  color: #111;
  position: relative;
  font-weight: 300;
}
.tab-file { margin-right: 12.5px; }
.tab-on { font-weight: 700; }
.tab-on::after {
  content: "";
  position: absolute;
  left: 27px;
  width: 48px;
  height: 5px;
  top: 49px;
  background: #117865;
}
.tab-ctx { background: #fff; font-weight: 700; color: #117865; }
.tab-wide { width: 162px; margin-left: 7px; }
.share {
  margin-left: auto;
  margin-right: 6px;
  margin-top: 7px;
  width: 134px;
  height: 42px;
  background: #117865;
  border-radius: 6px;
  color: #fff;
  font-size: 21px;
  display: flex;
  align-items: center;
  padding-left: 12px;
  gap: 8px;
}
.share-i { width: 24px; height: 28px; }
.share-c { width: 13px; height: 10px; }

/* ribbon */
.ribbon {
  height: 158px;
  flex: none;
  background: #f9f9f9;
  display: flex;
  box-shadow: 0 3px 6px rgba(0, 0, 0, .14);
  position: relative;
  z-index: 3;
}
.group {
  height: 155px;
  border-right: 2px solid #dcdcdc;
  display: flex;
  flex-direction: column;
}
.g-clip { width: 138px; }
.g-data { width: 688px; padding-left: 19px; }
.g-query { width: 189px; padding-left: 20px; }
.g-insert { width: 820px; padding-left: 12px; }
.g-calc { width: 321px; padding-left: 12px; }
.g-sens { width: 99px; }
.g-share { width: 100px; }
.g-cop { width: 103px; }
.items { flex: 1; display: flex; padding-top: 4px; min-height: 0; }
.glabel {
  height: 24px;
  line-height: 24px;
  margin-bottom: -3px;
  font-size: 18px;
  text-align: center;
  color: #252423;
  font-weight: 300;
}
.g-data .glabel { padding-right: 19px; }
.g-query .glabel { padding-right: 20px; }
.g-insert .glabel { padding-right: 12px; }
.item {
  display: flex;
  flex-direction: column;
  align-items: center;
  flex: none;
}
.ri { width: 56px; height: 56px; margin: 4px 0; flex: none; }
.lab {
  font-size: 21px;
  line-height: 29px;
  height: 29px;
  white-space: nowrap;
  letter-spacing: -.2px;
  font-weight: 300;
  color: #111;
}
.off .lab { color: #bdbdbd; }
.i-paste { width: 89px; }
.i68 { width: 68px; }
.i76 { width: 76px; }
.i78 { width: 78px; }
.i80 { width: 80px; }
.i82 { width: 82px; }
.i98 { width: 98px; }
.i100 { width: 100px; }
.i106 { width: 106px; }
.i112 { width: 112px; }
.i116 { width: 116px; }
.i134 { width: 134px; }
.i138 { width: 138px; }
.ifill { width: 100%; }
.chev {
  width: 11px;
  height: 9px;
  margin-top: 10px;
  fill: none;
  stroke: #3b3a39;
  stroke-width: 1.6;
  flex: none;
}
.off .chev { stroke: #bdbdbd; }
.chev-in { margin: 0; }
.smalls { width: 26px; display: flex; flex-direction: column; }
.sm { width: 26px; height: 36px; margin: 2px 0; flex: none; }

.gallery {
  width: 442px;
  height: 109px;
  margin: 8px 8px 0 4px;
  background: #fff;
  border: 1px solid #b5b5b5;
  border-bottom-width: 2px;
  border-bottom-color: #8a8a8a;
  display: flex;
  flex: none;
}
.gal-grid {
  width: 414px;
  display: grid;
  grid-template-columns: repeat(9, 45.5px);
  grid-auto-rows: 52px;
  padding: 1px 0 0 1px;
  border-right: 1px solid #b5b5b5;
  flex: none;
}
.cell { display: flex; align-items: center; justify-content: center; height: 44px; align-self: center; }
.cell-on { background: #e4e2e0; border: 1px solid #a8a6a4; }
.gi { width: 27px; height: 27px; }
.gal-more { flex: 1; text-align: center; padding-top: 26px; }
.collapse { width: 16px; height: 11px; margin-left: auto; margin-right: 4px; margin-top: 137px; }

/* main */
.main { flex: 1; display: flex; min-height: 0; }
.leftnav {
  width: 69px;
  flex: none;
  background: #f0f0f0;
  border-right: 2px solid #e2e2e2;
  display: flex;
  flex-direction: column;
  position: relative;
}
.nav-btn { height: 70px; display: flex; align-items: center; justify-content: center; }
.nav-on { position: relative; }
.nav-on::before {
  content: "";
  position: absolute;
  left: 0;
  top: 0;
  width: 2px;
  height: 70px;
  background: #0aa35c;
}
.ni { width: 30px; height: 30px; }

.center { width: 1800px; flex: none; display: flex; flex-direction: column; }
.work { flex: 1; display: flex; min-height: 0; }
.canvas {
  width: 1744px;
  flex: none;
  background: #fff;
  position: relative;
  overflow: hidden;
}
.page {
  position: absolute;
  left: 5px;
  top: 0;
  width: 1733px;
  height: 973px;
  border: 3px dotted #555;
  border-top: none;
  border-width: 0 3px 3px 3px;
}
.grid { position: absolute; left: 0; top: 0; width: 100%; height: 100%; }
.visual { position: absolute; overflow: visible; }
.v-years { left: 0; top: 0; width: 880px; height: 388px; }
.v-region { left: 870px; top: -16px; width: 530px; height: 440px; }
.ct-title { font-size: 24px; letter-spacing: .1px; dominant-baseline: central; fill: #252423; }
.tick { font-size: 16px; dominant-baseline: central; fill: #555; font-weight: 300; }
.ax-title { font-size: 21px; dominant-baseline: central; fill: #252423; }
.end { text-anchor: end; }
.mid { text-anchor: middle; }
.gl { fill: none; stroke: #d9d9d9; stroke-width: 2; stroke-dasharray: 1 5; }
.bar { fill: #118dff; }
.sel { fill: #fff; stroke: #7a7a7a; stroke-width: 2; }
.hd { fill: #fff; stroke: #605e5c; stroke-width: 2.5; }
.arrow { fill: #111; }
.hdr { fill: none; stroke: #7a7a7a; stroke-width: 2; }
.hdd { fill: #707070; }
.sb-track { fill: #f1f1f1; }
.sb-thumb { fill: #b3b3b3; }

.float-tools {
  position: absolute;
  left: 823px;
  top: 0;
  display: flex;
  flex-direction: column;
  gap: 22px;
}
.float-btn {
  width: 47px;
  height: 48px;
  background: #e7e7e7;
  box-shadow: 0 2px 5px rgba(0, 0, 0, .25);
  display: flex;
  align-items: center;
  justify-content: center;
}
.fb-i { width: 34px; height: 36px; }

.kpi {
  position: absolute;
  left: 0;
  top: 391px;
  width: 864px;
  height: 404px;
  background: #fff;
  padding: 152px 0 0 277px;
}
.kpi-val { height: 88px; display: flex; align-items: flex-end; white-space: nowrap; }
.kpi-num {
  font-family: Roboto, sans-serif;
  font-size: 72px;
  font-weight: 400;
  line-height: 71px;
  letter-spacing: -2.800px;
  margin-right: 22px;
  color: #252423;
  -webkit-text-stroke: 1.500px #252423;
}
.kpi-unit { font-size: 80px; line-height: 88px; color: #252423; }
.kpi-lab {
  font-size: 22px;
  line-height: 30px;
  margin: 3px 0 0 48px;
  color: #555;
  white-space: nowrap;
}

/* filters */
.filters {
  flex: 1;
  background: #fff;
  border-left: 2px solid #ececec;
  display: flex;
  flex-direction: column;
  align-items: center;
  padding-top: 22px;
}
.flt-coll { width: 22px; height: 20px; }
.flt-fun { width: 20px; height: 22px; margin-top: 30px; margin-left: 6px; }
.flt-txt {
  writing-mode: vertical-rl;
  text-orientation: sideways;
  font-size: 27px;
  line-height: 30px;
  font-weight: 700;
  margin-top: 12px;
  margin-right: 4px;
  color: #252423;
}

/* page tabs */
.pagebar {
  height: 60px;
  flex: none;
  background: #f0f0f0;
  display: flex;
  align-items: flex-start;
  border-bottom: 1px solid #e0e0e0;
}
.device { width: 72px; height: 59px; display: flex; align-items: center; justify-content: center; padding-bottom: 8px; position: relative; flex: none; }
.dev-ph { width: 84px; }
.dev-on::after {
  content: "";
  position: absolute;
  left: 16px;
  width: 42px;
  height: 5px;
  bottom: 7px;
  border-radius: 3px;
  background: #117865;
}
.dev-i { width: 34px; height: 32px; }
.dev-p { width: 22px; height: 36px; }
.pg-ar { width: 9px; height: 18px; margin: 15px 30px 0 6px; flex: none; }
.pg-ar + .pg-ar { margin-left: 0; margin-right: 12px; }
.pg-tab {
  width: 133px;
  height: 60px;
  background: #fff;
  border-bottom: 7px solid #117865;
  text-align: center;
  line-height: 62px;
  font-size: 20px;
  flex: none;
}
.pg-add {
  width: 68px;
  height: 60px;
  background: #117865;
  color: #fff;
  font-weight: 700;
  font-size: 36px;
  line-height: 57px;
  text-align: center;
  flex: none;
}

/* panes */
.pane { flex: none; background: #f0f0f0; }
.pane-build { width: 314px; padding-left: 15px; }
.pane-data { width: 321px; border-left: 4px solid #e6e6e6; }
.pane-head { height: 68px; display: flex; align-items: center; }
.pane-title { margin: 0; font-size: 28px; line-height: 40px; font-weight: 700; color: #252423; }
.dots { letter-spacing: 2px; font-size: 24px; font-weight: 700; line-height: 20px; color: #3b3a39; margin-left: auto; }
.pane-chev { width: 21px; height: 23px; margin: 0 12px 0 15px; }
.pane-data .pane-head { padding-left: 13px; padding-right: 2px; }
.f-label { font-size: 20px; line-height: 28px; height: 28px; padding-top: 1px; margin-top: 16px; margin-bottom: 5px; color: #3b3a39; white-space: nowrap; }
.f-first { margin-top: 0; line-height: 26px; height: 26px; margin-bottom: 6px; }
.viz-box {
  width: 287px;
  height: 373px;
  background: #fff;
  border: 1px solid #a0a0a0;
  border-radius: 3px;
  display: grid;
  grid-template-columns: repeat(6, 45.700px);
  grid-auto-rows: 45.300px;
  padding: 4.500px 0 0 5px;
  margin-bottom: -1px;
}
.viz { display: flex; align-items: center; justify-content: center; font-size: 24px; }
.viz-on { outline: 2px solid #252423; outline-offset: -3px; }
.viz-dots { font-weight: 700; letter-spacing: 3px; }
.viz-r { font-size: 28px; font-weight: 700; color: #2b7cd3; }
.vi { width: 32px; height: 32px; }
.well {
  width: 287px;
  border: 1px dashed #555;
  border-radius: 3px;
  padding: 7px;
  display: flex;
  flex-direction: column;
  gap: 7px;
}
.field, .addbtn {
  height: 51px;
  border: 1px solid #6b6a68;
  border-radius: 4px;
  font-size: 20px;
  display: flex;
  align-items: center;
}
.field { background: #f9f9f9; padding-left: 10px; color: #3b3a39; font-size: 21px; }
.field-t { white-space: nowrap; letter-spacing: -.2px; padding-top: 2px; }
.fx { width: 20px; height: 22px; fill: none; stroke: #252423; stroke-width: 1.6; margin-left: auto; flex: none; }
.fx-last { margin-right: 14px; }
.fsep { width: 1px; height: 32px; background: #444; margin: 0 0 0 15px; }
.fc { width: 11px; height: 22px; fill: none; stroke: #252423; stroke-width: 1.6; margin: 0 15px 0 21px; flex: none; }
.addbtn { background: #fff; justify-content: center; font-weight: 700; font-size: 21px; color: #252423; }
.plus { font-weight: 400; }

.search {
  width: 299px;
  height: 40px;
  margin: 12px 0 18px 7px;
  background: #fff;
  border: 1px solid #e4e4e4;
  border-bottom: 1px solid #7a7a7a;
  border-radius: 7px;
  display: flex;
  align-items: center;
  padding-left: 19px;
  gap: 12px;
  font-size: 24px;
  color: #666;
}
.search-i { width: 25px; height: 25px; }
.t-row { height: 42px; display: flex; align-items: center; padding-left: 74px; font-size: 20px; color: #3b3a39; white-space: nowrap; }
.t-root { padding-left: 21px; font-size: 21px; }
.t-chev { width: 20px; height: 14px; flex: none; }
.t-ico { width: 32px; height: 30px; position: relative; margin-left: 8px; flex: none; }
.t-tab { width: 22px; height: 26px; position: absolute; left: -1px; top: 0; }
.t-ok { width: 20px; height: 20px; position: absolute; left: 6px; top: 11px; }
.cb { width: 20px; height: 20px; background: #fff; border: 1px solid #b5b5b5; border-radius: 3px; flex: none; }
.cb-on { background: #117865; border-color: #117865; }
.cb svg { width: 18px; height: 18px; display: block; }
.t-sig { width: 47px; text-align: center; font-size: 26px; flex: none; }
.t-long { letter-spacing: -.2px; }
.t-dots { margin-left: 10px; font-weight: 700; }

.strip {
  flex: 1;
  background: #f9f9f9;
  border-left: 2px solid #e6e6e6;
  display: flex;
  flex-direction: column;
}
.st-btn { height: 56.500px; display: flex; align-items: center; justify-content: center; flex: none; }
.st-on { background: #e6e6e6; border-bottom: 2px solid #555; }
.st-db { width: 28px; height: 40px; }
.st-i { width: 34px; height: 38px; }
.st-m { width: 22px; height: 34px; }
.st-p { width: 32px; height: 32px; }
.st-gear { margin-top: auto; height: 55px; border-top: 1px solid #e0e0e0; display: flex; align-items: center; justify-content: center; }
.st-g { width: 36px; height: 36px; }

/* status */
.status {
  height: 39px;
  flex: none;
  background: #f0f0f0;
  border-top: 2px solid #e6e6e6;
  display: flex;
  align-items: center;
  padding-left: 5px;
  font-size: 20px;
  color: #444;
}
.status-l { margin-top: 4px; letter-spacing: .3px; }
.zoom { margin-left: auto; display: flex; align-items: center; padding-right: 27px; }
.zoom-bar { width: 225px; height: 37px; }
.z-sym { fill: none; stroke: #555; stroke-width: 3; }
.z-line { fill: none; stroke: #777; stroke-width: 1.500; }
.z-tick { fill: none; stroke: #555; stroke-width: 2; }
.zoom-pct { margin-left: 19px; width: 73px; color: #666; }
.fit { width: 28px; height: 22px; }
```
